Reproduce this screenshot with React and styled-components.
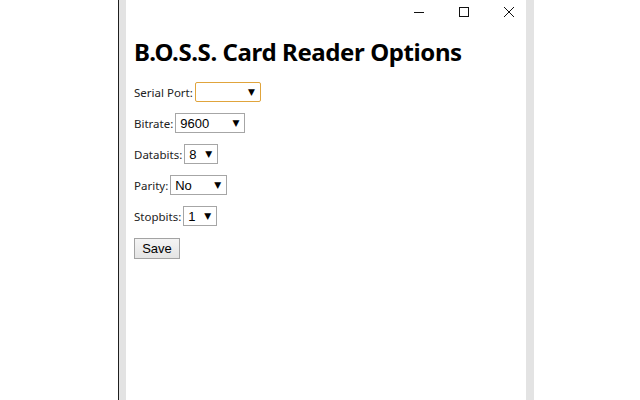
import React from 'react';
import styled, { createGlobalStyle } from 'styled-components';

const GlobalStyle = createGlobalStyle`
  html, body {
    margin: 0;
    padding: 0;
    background: #ffffff;
  }
  #root {
    width: 640px;
    height: 400px;
    overflow: hidden;
  }
`;

const Screen = styled.div`
  display: flex;
  width: 640px;
  height: 400px;
  background: #ffffff;
`;

const Backdrop = styled.div`
  width: 118px;
  border-right: 1px solid #1f1f1f;
`;

const Strip = styled.div`
  width: ${(p) => p.$w}px;
  background: #e3e3e3;
`;

const Window = styled.div`
  width: 400px;
  background: #ffffff;
  display: flex;
  flex-direction: column;
  font-family: 'Noto Sans', 'Open Sans', sans-serif;
  color: #111;
`;

const TitleBar = styled.div`
  height: 24px;
  display: flex;
  justify-content: flex-end;
  align-items: center;
  padding-right: 12px;
`;

const WinButton = styled.div`
  width: 10px;
  height: 10px;
  margin-left: 35px;
  display: flex;
`;

const Content = styled.div`
  padding: 12px 8px 0 8px;
  display: flex;
  flex-direction: column;
`;

const Heading = styled.h1`
  margin: 0 0 14px 0;
  font-size: 24px;
  font-weight: 700;
  letter-spacing: -0.4px;
  line-height: 32px;
  color: #000;
`;

const Row = styled.div`
  display: flex;
  align-items: center;
  height: 20px;
  margin-bottom: 11px;
`;

const Label = styled.span`
  font-size: 11.5px;
  color: #222;
  margin-right: 2px;
`;

const Select = styled.div`
  box-sizing: border-box;
  width: ${(p) => p.$w}px;
  height: 20px;
  border: 1px solid ${(p) => (p.$focus ? '#e0a43c' : '#a6a6a6')};
  border-radius: ${(p) => (p.$focus ? '2px' : '0')};
  display: flex;
  align-items: center;
  justify-content: space-between;
  padding: 0 5px 0 4px;
  font-family: 'Liberation Sans', Arial, sans-serif;
  font-size: 13px;
  color: #000;
  background: #fff;
`;

const Arrow = styled.span`
  font-family: 'DejaVu Sans', sans-serif;
  font-size: 9px;
  line-height: 1;
`;

const Button = styled.div`
  box-sizing: border-box;
  width: 46px;
  height: 21px;
  margin-top: 1px;
  border: 1px solid #a3a3a3;
  background: linear-gradient(#f4f4f4, #e4e4e4);
  font-family: 'Liberation Sans', Arial, sans-serif;
  font-size: 13px;
  display: flex;
  align-items: center;
  justify-content: center;
  color: #000;
`;

const fields = [
  { label: 'Serial Port:', value: '', width: 66, focus: true },
  { label: 'Bitrate:', value: '9600', width: 70 },
  { label: 'Databits:', value: '8', width: 34 },
  { label: 'Parity:', value: 'No', width: 57 },
  { label: 'Stopbits:', value: '1', width: 34 },
];

const App = () => (
  <>
    <GlobalStyle />
    <Screen>
      <Backdrop />
      <Strip $w={7} />
      <Window>
        <TitleBar>
          <WinButton>
            <svg width="10" height="10" viewBox="0 0 10 10">
              <line x1="0" y1="5.5" x2="10" y2="5.5" stroke="#111" strokeWidth="1" />
            </svg>
          </WinButton>
          <WinButton>
            <svg width="10" height="10" viewBox="0 0 10 10">
              <rect x="0.5" y="0.5" width="9" height="9" fill="none" stroke="#111" strokeWidth="1" />
            </svg>
          </WinButton>
          <WinButton>
            <svg width="10" height="10" viewBox="0 0 10 10">
              <path d="M0 0 L10 10 M10 0 L0 10" stroke="#111" strokeWidth="1" />
            </svg>
          </WinButton>
        </TitleBar>
        <Content>
          <Heading>B.O.S.S. Card Reader Options</Heading>
          {fields.map((f) => (
            <Row key={f.label}>
              <Label>{f.label}</Label>
              <Select $w={f.width} $focus={f.focus}>
                <span>{f.value}</span>
                <Arrow>▼</Arrow>
              </Select>
            </Row>
          ))}
          <Button>Save</Button>
        </Content>
      </Window>
      <Strip $w={8} />
    </Screen>
  </>
);

export default App;
